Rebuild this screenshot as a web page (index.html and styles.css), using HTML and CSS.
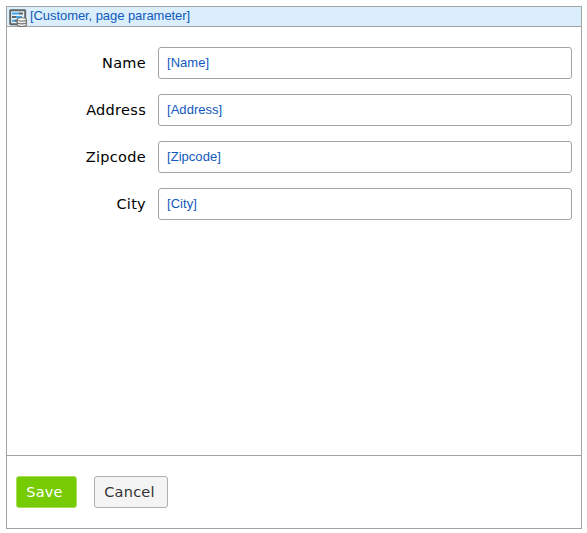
FILE: index.html
```html
<!DOCTYPE html>
<html lang="en">
<head>
<meta charset="utf-8">
<title>Customer</title>
<link rel="stylesheet" href="styles.css">
</head>
<body>
<main class="dataview">
  <header class="bar">
    <svg class="icon" width="18" height="18" viewBox="0 0 18 18">
      <rect x="1.2" y="1.2" width="15" height="14" rx=".5" fill="#e6f1f9" stroke="#5e6367" stroke-width="1.9"/>
      <path d="M3 4.4h7M7 8h6M3 11.7h4" stroke="#3fa4e6" stroke-width="2"/>
      <path d="M10 4.4h4M3 8h4M6 11.7h3" stroke="#5e6367" stroke-width="2"/>
      <path d="M8.2 10.6v5c0 2.5 9.2 2.5 9.2 0v-5z" fill="#f5f5f5" stroke="#707070" stroke-width="1.1"/>
      <ellipse cx="12.8" cy="10.4" rx="4.6" ry="1.7" fill="#fff" stroke="#707070" stroke-width="1.1"/>
      <path d="M8.2 13.1c0 2.3 9.2 2.3 9.2 0" fill="none" stroke="#707070" stroke-width="1.1"/>
    </svg>
    <span class="title">[Customer, page parameter]</span>
  </header>
  <section class="fields">
    <div class="row"><span class="label">Name</span><div class="input">[Name]</div></div>
    <div class="row"><span class="label">Address</span><div class="input">[Address]</div></div>
    <div class="row"><span class="label">Zipcode</span><div class="input">[Zipcode]</div></div>
    <div class="row"><span class="label">City</span><div class="input">[City]</div></div>
  </section>
  <footer class="actions">
    <button class="btn save">Save</button>
    <button class="btn cancel">Cancel</button>
  </footer>
</main>
</body>
</html>
```
FILE: styles.css
```css
* { box-sizing: border-box; }
body { margin: 6px 5px 4px 6px; background: #fff; }
.dataview {
  display: flex;
  flex-direction: column;
  height: 523px;
  border: 1px solid #a3a3a3;
}
.bar {
  display: flex;
  height: 20px;
  padding-left: 2px;
  background: #daeefc;
  border-bottom: 1px solid #a3a3a3;
}
.icon { flex: none; margin-top: 2px; }
.title, .input {
  font-family: "Liberation Sans", Arial, sans-serif;
  font-size: 13px;
  color: #1059bd;
}
.title { margin-left: 3px; line-height: 18px; letter-spacing: -.07px; }
.fields {
  flex: 1;
  display: flex;
  flex-direction: column;
  gap: 15px;
  padding: 20px 9px 0 0;
}
.row { display: flex; height: 32px; }
.label {
  width: 139px;
  margin-right: 12px;
  text-align: right;
  font: 14.5px/32px "DejaVu Sans", Verdana, sans-serif;
  letter-spacing: .3px;
  color: #000;
}
.input {
  flex: 1;
  padding-left: 8px;
  line-height: 29px;
  letter-spacing: .04px;
  border: 1px solid #a3a3a3;
  border-radius: 3px;
}
.actions {
  display: flex;
  gap: 17px;
  height: 73px;
  padding: 20px 9px;
  border-top: 1px solid #a3a3a3;
}
.btn {
  height: 32px;
  padding: 0;
  border: 1px solid #b0b0b0;
  border-radius: 3px;
  font: 14.5px/29px "DejaVu Sans", Verdana, sans-serif;
  letter-spacing: .25px;
}
.save { width: 61px; background: #76cb02; border-color: #a5e05a; color: #fff; padding-right: 4px; }
.cancel { width: 74px; background: #f4f4f4; color: #333; padding-right: 3px; }
```
